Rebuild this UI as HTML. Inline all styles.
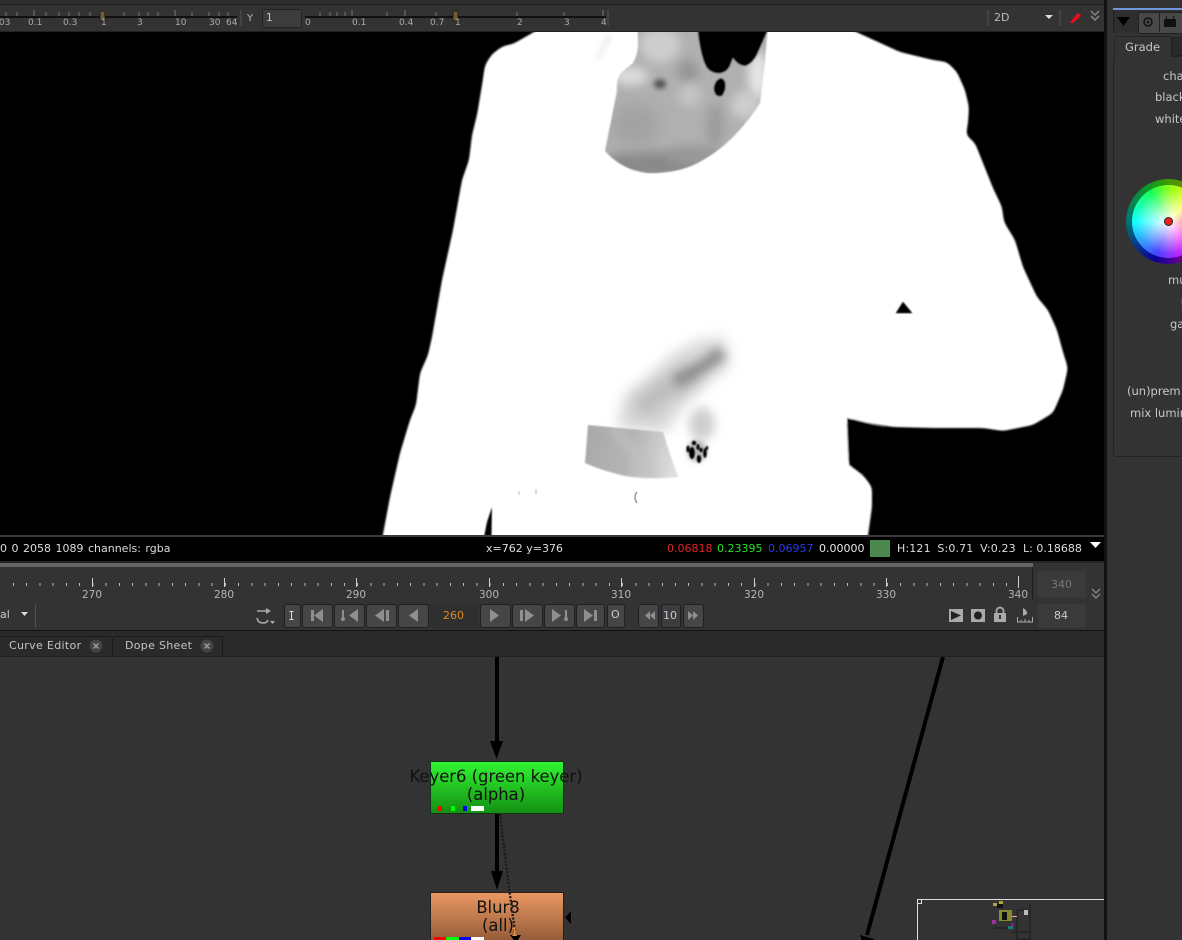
<!DOCTYPE html>
<html><head><meta charset="utf-8"><title>Nuke viewer</title>
<style>
html,body{margin:0;padding:0;background:#333}
#p{position:relative;width:1182px;height:940px;overflow:hidden;background:#333;font-family:"DejaVu Sans","Liberation Sans",sans-serif;font-size:11px;color:#ccc}
#p div,#p span.a{position:absolute}
.t{position:absolute;white-space:nowrap;line-height:14px}
.s{font-size:9px;color:#aaa;line-height:10px}
.b{background:#464646;border:1px solid #202020;border-radius:3px;box-sizing:border-box;height:24px;top:604px}
.l{font-size:10.5px;color:#b5b5b5}
.p{color:#c8c8c8;font-size:11.5px}
</style></head><body><div id="p">

<!-- top toolbar -->
<div style="left:0;top:0;width:1105px;height:4px;background:#2e2e2e"></div>
<div style="left:0;top:4px;width:1105px;height:1px;background:#1c1c1c"></div>
<div style="left:0;top:5px;width:1105px;height:26px;background:#333"></div>
<div style="left:0;top:31px;width:1105px;height:1px;background:#222"></div>
<div style="left:0;top:16px;width:237px;height:2px;background:#111"></div>
<div style="left:305px;top:16px;width:301px;height:2px;background:#111"></div>
<svg style="position:absolute;left:0;top:0" width="620" height="32"><path d="M6 12v4M17 12v4M34 10v6M46 12v4M59 12v4M69 12v4M79 12v4M90 12v4M124 12v4M139 12v4M148 12v4M158 12v4M175 10v6M192 12v4M209 12v4M219 12v4M228 12v4M320 12v4M330 12v4M337 12v4M345 12v4M352 10v6M387 12v4M405 10v6M436 12v4M517 12v4M564 12v4M603 10v6" stroke="#777" fill="none"/><rect x="100" y="11" width="5" height="10" fill="#6d5e30" stroke="#1d1d1d"/><rect x="453" y="11" width="5" height="10" fill="#6d5e30" stroke="#1d1d1d"/><path d="M241 10v16M608 10v16" stroke="#555"/></svg>
<span class="t s" style="left:-4px;top:18px">.03</span><span class="t s" style="left:28px;top:18px">0.1</span><span class="t s" style="left:63px;top:18px">0.3</span><span class="t s" style="left:101px;top:18px">1</span><span class="t s" style="left:137px;top:18px">3</span><span class="t s" style="left:175px;top:18px">10</span><span class="t s" style="left:209px;top:18px">30</span><span class="t s" style="left:226px;top:18px">64</span>
<span class="t" style="left:247px;top:12px;color:#abc;font-size:10px">Y</span>
<div style="left:262px;top:9px;width:38px;height:17px;background:#3c3c3c;border:1px solid #222;border-radius:3px"></div>
<span class="t" style="left:266px;top:11px;color:#bcd;font-size:10.5px">1</span>
<span class="t s" style="left:305px;top:18px">0</span><span class="t s" style="left:352px;top:18px">0.1</span><span class="t s" style="left:399px;top:18px">0.4</span><span class="t s" style="left:430px;top:18px">0.7</span><span class="t s" style="left:455px;top:18px">1</span><span class="t s" style="left:517px;top:18px">2</span><span class="t s" style="left:564px;top:18px">3</span><span class="t s" style="left:601px;top:18px">4</span>
<span class="t" style="left:994px;top:11px;color:#bbb">2D</span>
<svg style="position:absolute;left:985px;top:5px" width="120" height="26"><path d="M3 5v16M75 5v16" stroke="#555"/><path d="M60 10h8l-4 4z" fill="#ddd"/><path d="M85 18l5-7 3-3 3 2-2 3-6 5z" fill="#e8101a"/><path d="M106 6l4 4 4-4M106 11l4 4 4-4" stroke="#888" fill="none" stroke-width="1.5"/></svg>

<!-- viewer image -->
<div style="left:0;top:32px;width:1105px;height:503px;background:#000;overflow:hidden">
<svg style="position:absolute;left:0;top:-32px" width="1105" height="535" viewBox="0 0 1105 535">
<defs>
<filter id="e" x="-5%" y="-5%" width="110%" height="110%"><feGaussianBlur stdDeviation="0.8"/></filter>
<filter id="smooth" x="-5%" y="-5%" width="110%" height="110%"><feGaussianBlur stdDeviation="3.2"/><feComponentTransfer><feFuncA type="linear" slope="5" intercept="-2"/></feComponentTransfer></filter>
<filter id="b2" x="-50%" y="-50%" width="200%" height="200%"><feGaussianBlur stdDeviation="2.5"/></filter>
<filter id="b5" x="-50%" y="-50%" width="200%" height="200%"><feGaussianBlur stdDeviation="5"/></filter>
<filter id="b7" x="-50%" y="-50%" width="200%" height="200%"><feGaussianBlur stdDeviation="7"/></filter>
<filter id="b9" x="-50%" y="-50%" width="200%" height="200%"><feGaussianBlur stdDeviation="9"/></filter>
<clipPath id="nk"><path d="M637 25C638 40 640 50 633 63L622 72Q616 78 617 91L605 151Q622 170 647 173 680 174 703 160 735 142 760 103L765 61 768 25Z"/></clipPath>
<clipPath id="pk"><path d="M588 425L663 432Q670 455 678 477 650 480 625 476 600 470 585 463Z"/></clipPath>
<linearGradient id="pg" x1="0" x2="1" y1="0" y2="0.2"><stop offset="0" stop-color="#a6a6a6"/><stop offset=".55" stop-color="#b4b4b4"/><stop offset="1" stop-color="#dedede"/></linearGradient>
</defs>
<g filter="url(#e)"><path filter="url(#smooth)" fill="#fff" d="M555 20L513 44 503 46 492 54 485 65 482 85 477 115 472 135 469 160 462 180 453 230 442 280 432 337 428 355 420 373 417 397 416 405 410 420 400 453 390 497 380 550 866 550 872 507 872 487 863 475 849 465 847 418 867 423 893 427 933 428 983 428 1003 431 1033 425 1053 413 1063 390 1068 368 1063 352 1057 330 1048 310 1037 297 1023 267 1015 240 1004 222 1002 207 993 188 983 163 975 143 966 135 968 123 969 107 965 90 957 72 947 62 933 60 900 52 830 20Z"/>
<path d="M847 418L849 465 862 475 885 445 885 427 867 423Z" fill="#000"/></g>
<path d="M492 507L491.500 537 484 537 487 522Z" fill="#000" filter="url(#e)"/>
<path d="M610 35L597 60" stroke="#f2f2f2" stroke-width="6" filter="url(#b2)"/>
<!-- neck -->
<g filter="url(#e)"><g clip-path="url(#nk)">
<rect x="600" y="25" width="175" height="155" fill="#b0b0b0"/>
<ellipse cx="650" cy="165" rx="55" ry="14" fill="#8a8a8a" filter="url(#b5)"/>
<ellipse cx="695" cy="155" rx="28" ry="10" fill="#989898" filter="url(#b5)"/>
<ellipse cx="635" cy="125" rx="25" ry="22" fill="#a2a2a2" filter="url(#b9)"/>
<ellipse cx="630" cy="76" rx="18" ry="9" fill="#dedede" filter="url(#b5)"/>
<ellipse cx="660" cy="45" rx="20" ry="18" fill="#cdcdcd" filter="url(#b5)"/>
<ellipse cx="688" cy="72" rx="10" ry="12" fill="#949494" filter="url(#b5)"/>
<ellipse cx="690" cy="95" rx="12" ry="12" fill="#c4c4c4" filter="url(#b5)"/>
<ellipse cx="660" cy="84" rx="6" ry="5" fill="#555" filter="url(#b2)"/>
<ellipse cx="758" cy="75" rx="10" ry="24" fill="#e6e6e6" filter="url(#b5)"/>
<ellipse cx="745" cy="105" rx="14" ry="14" fill="#cecece" filter="url(#b5)"/>
<ellipse cx="715" cy="125" rx="9" ry="22" fill="#9c9c9c" filter="url(#b5)"/>
<path d="M697 25C699 45 702 60 707 68 713 75 725 76 730 66L733 58Q738 66 746 66 753 63 757 55L768 30V25Z" fill="#000"/>
<path d="M721 78C727 79 727 90 722 96 715 98 713 91 714 86Q716 79 721 78Z" fill="#000"/>
</g></g>
<!-- smear -->
<path d="M617 428L625 395 650 375 672 355 700 340 725 338 730 365 705 385 680 410 665 432Z" fill="#d6d6d6" filter="url(#b7)"/>
<path d="M640 412C655 392 675 385 695 372" stroke="#bbb" stroke-width="20" fill="none" filter="url(#b7)"/>
<path d="M675 382C695 372 710 362 722 352" stroke="#8e8e8e" stroke-width="13" fill="none" filter="url(#b5)"/>
<ellipse cx="702" cy="424" rx="13" ry="17" fill="#cfcfcf" filter="url(#b5)"/>
<!-- pocket -->
<g filter="url(#e)"><g clip-path="url(#pk)"><rect x="580" y="420" width="105" height="65" fill="url(#pg)"/><path d="M612 425L655 478" stroke="#c0c0c0" stroke-width="8" filter="url(#b5)"/></g></g>
<!-- dots -->
<ellipse cx="697" cy="451" rx="10" ry="11" fill="#bbb" filter="url(#b2)"/>
<g fill="#000" filter="url(#e)">
<ellipse cx="694" cy="443" rx="2.2" ry="2.2"/><ellipse cx="688" cy="449" rx="1.6" ry="3.5"/><ellipse cx="692" cy="453" rx="2.8" ry="6"/><ellipse cx="698" cy="447" rx="1.6" ry="3"/><ellipse cx="699" cy="459" rx="2.2" ry="4"/><ellipse cx="705" cy="453" rx="1.8" ry="5"/><ellipse cx="701" cy="450" rx="1.6" ry="2.2"/><ellipse cx="707" cy="448" rx="1.2" ry="2"/>
</g>
<path d="M903 302L912 313 896 313Z" fill="#000" filter="url(#e)" stroke="#000" stroke-width=".5"/>
<path d="M637 492Q633 497 637 503" stroke="#999" stroke-width="1.5" fill="none"/>
<path d="M519 491v4M536 489v5" stroke="#ccc" stroke-width="1.3"/>
</svg>
</div>

<!-- status bar -->
<div style="left:0;top:535px;width:1105px;height:2px;background:#3a3a3a"></div>
<div style="left:0;top:537px;width:1105px;height:24px;background:#000"></div>
<span class="t" style="left:0;top:542px;color:#ddd;word-spacing:1px">0 0 2058 1089 channels: rgba</span>
<span class="t" style="left:486px;top:542px;color:#ddd">x=762 y=376</span>
<span class="t" style="left:667px;top:542px;color:#e42424">0.06818</span>
<span class="t" style="left:717px;top:542px;color:#28e028">0.23395</span>
<span class="t" style="left:768px;top:542px;color:#2a3ae8">0.06957</span>
<span class="t" style="left:819px;top:542px;color:#e8e8e8">0.00000</span>
<div style="left:870px;top:540px;width:20px;height:17px;background:#4a8a4f"></div>
<span class="t" style="left:897px;top:542px;color:#ddd;word-spacing:3px;letter-spacing:.15px">H:121 S:0.71 V:0.23</span>
<div style="left:1023px;top:542px;width:60px;height:14px;overflow:hidden"><span class="t" style="left:0;top:0;color:#ddd">L: 0.18688</span></div>
<svg style="position:absolute;left:1088px;top:541px" width="14" height="8"><path d="M2 1h11l-5.500 6z" fill="#fff"/></svg>

<!-- timeline -->
<div style="left:0;top:561px;width:1105px;height:2px;background:#262626"></div>
<div style="left:0;top:563px;width:1033px;height:4px;background:#666"></div>
<div style="left:1032px;top:567px;width:1px;height:33px;background:#1c1c1c"></div>
<div style="left:13px;top:583px;width:1006px;height:3px;background:repeating-linear-gradient(90deg,#b8b8b8 0 1px,transparent 1px 13.24px)"></div>
<svg style="position:absolute;left:0;top:576px" width="1030" height="14"><path d="M92.500 2v9M224.500 2v9M356.500 2v9M489.500 2v9M621.500 2v9M754.500 2v9M886.500 2v9M1018.500 0v12" stroke="#d0d0d0" fill="none"/></svg>
<span class="t l" style="left:82px;top:588px">270</span><span class="t l" style="left:214px;top:588px">280</span><span class="t l" style="left:346px;top:588px">290</span><span class="t l" style="left:479px;top:588px">300</span><span class="t l" style="left:611px;top:588px">310</span><span class="t l" style="left:744px;top:588px">320</span><span class="t l" style="left:876px;top:588px">330</span><span class="t l" style="left:1008px;top:588px">340</span>
<div style="left:1037px;top:571px;width:49px;height:27px;background:#3a3a3a;border-radius:2px"></div>
<span class="t" style="left:1051px;top:578px;color:#777">340</span>
<svg style="position:absolute;left:1090px;top:588px" width="12" height="14"><path d="M2 1l4 4 4-4M2 6l4 4 4-4" stroke="#888" fill="none" stroke-width="1.3"/></svg>

<!-- transport row -->
<span class="t" style="left:0;top:608px;color:#ccc">al</span>
<div class="b" style="left:284px;width:17px"></div>
<div class="b" style="left:302px;width:31px"></div>
<div class="b" style="left:334px;width:31px"></div>
<div class="b" style="left:366px;width:31px"></div>
<div class="b" style="left:398px;width:31px"></div>
<div style="left:430px;top:604px;width:49px;height:24px;background:#2f2f2f"></div>
<span class="t" style="left:443px;top:609px;color:#e08a20">260</span>
<div class="b" style="left:480px;width:31px"></div>
<div class="b" style="left:512px;width:31px"></div>
<div class="b" style="left:544px;width:31px"></div>
<div class="b" style="left:576px;width:29px"></div>
<div class="b" style="left:607px;width:18px"></div>
<span class="t" style="left:611px;top:608px;color:#ccc">O</span>
<div class="b" style="left:638px;width:21px"></div>
<div class="b" style="left:661px;width:20px;background:#3d3d3d"></div>
<span class="t" style="left:663px;top:609px;color:#bcd">10</span>
<div class="b" style="left:683px;width:21px"></div>
<div style="left:1038px;top:604px;width:48px;height:24px;background:#3a3a3a;border-radius:2px"></div>
<span class="t" style="left:1054px;top:609px;color:#ccc">84</span>
<svg style="position:absolute;left:0;top:600px" width="1060" height="32">
<path d="M21 12h7l-3.500 4z" fill="#ddd"/><path d="M35.500 5v22" stroke="#555"/>
<g fill="none" stroke="#aaa" stroke-width="1.600"><path d="M257 11h11M268 20q-1 3-5 3-5 0-6-5"/></g>
<path d="M266 8l5 3-5 3zM270 21h5l-2.500 3z" fill="#aaa"/>
<path d="M289.500 11.500h4M289.500 19.500h4M291.500 11.500v8" stroke="#ddd" fill="none"/>
<g fill="#8f8f8f">
<rect x="311" y="10" width="3" height="11"/><path d="M323 9v13l-9-6.500z"/>
<path d="M358 9v13l-9-6.500z"/><circle cx="343" cy="19" r="2"/><rect x="342" y="10" width="2" height="8"/>
<path d="M384 9v13l-9-6.500z"/><rect x="386" y="10" width="3" height="11"/>
<path d="M418 9v13l-9-6.500z"/>
<path d="M490 9v13l9-6.500z"/>
<rect x="520" y="10" width="3" height="11"/><path d="M525 9v13l9-6.500z"/>
<path d="M552 9v13l9-6.500z"/><circle cx="566" cy="19" r="2"/><rect x="565" y="10" width="2" height="8"/>
<path d="M584 9v13l9-6.500z"/><rect x="594" y="10" width="3" height="11"/>
<path d="M650 11v9l-5-4.500zM655 11v9l-5-4.500zM688 11v9l5-4.500zM693 11v9l5-4.500z"/>
</g>
<rect x="949" y="9" width="14" height="13" fill="#aaa"/><path d="M951 11v9l10-4.500z" fill="#222"/>
<rect x="971" y="9" width="14" height="13" fill="#aaa"/><circle cx="978" cy="15.500" r="4" fill="#222"/>
<rect x="994" y="13" width="12" height="9" fill="#aaa"/><path d="M996.500 13v-2a3.500 3.500 0 0 1 7 0v2" stroke="#aaa" fill="none" stroke-width="1.800"/><rect x="999" y="15" width="2" height="4" fill="#333"/>
<path d="M1017.500 17v5h15v-5M1021 20v2M1025 19v3M1029 20v2" stroke="#aaa" fill="none"/><path d="M1023 8q5 3 4 6l-4 2z" fill="#aaa"/>
</svg>

<!-- separator & tabs -->
<div style="left:0;top:630px;width:1105px;height:1px;background:#111"></div>
<div style="left:0;top:631px;width:1105px;height:26px;background:#2a2a2a"></div>
<div style="left:0;top:656px;width:1105px;height:1px;background:#222"></div>
<div style="left:112px;top:637px;width:1px;height:19px;background:#1c1c1c"></div>
<div style="left:113px;top:636px;width:109px;height:1px;background:#1c1c1c"></div>
<div style="left:0;top:636px;width:112px;height:1px;background:#1c1c1c"></div>
<div style="left:222px;top:636px;width:1px;height:20px;background:#1c1c1c"></div>
<span class="t" style="left:9px;top:639px;color:#c4c4c4;letter-spacing:.33px">Curve Editor</span>
<span class="t" style="left:125px;top:639px;color:#c4c4c4;letter-spacing:.3px">Dope Sheet</span>
<svg style="position:absolute;left:88px;top:638px" width="130" height="16"><circle cx="8" cy="8" r="6.500" fill="#444"/><circle cx="119" cy="8" r="6.500" fill="#444"/><path d="M5.500 5.500l5 5M10.500 5.500l-5 5M116.500 5.500l5 5M121.500 5.500l-5 5" stroke="#999" stroke-width="1.500"/></svg>

<!-- node graph -->
<svg style="position:absolute;left:0;top:657px" width="1105" height="283" viewBox="0 657 1105 283">
<path d="M497 657V743" stroke="#000" stroke-width="4"/><path d="M490 741h13l-6.500 18z" fill="#000"/>
<path d="M497 813V872" stroke="#000" stroke-width="4"/><path d="M491 871h12l-6 19z" fill="#000"/>
<path d="M943 657L867 935" stroke="#000" stroke-width="4"/><path d="M860 935l14 4-9 12z" fill="#000"/>
<path d="M1105.500 899.500H917.500V940" stroke="#e0e0e0" fill="none"/><rect x="917.500" y="899.500" width="4" height="4" fill="#333" stroke="#e0e0e0"/>
<g fill="none" stroke="#222" stroke-width="1.500"><path d="M1017 910h10M1030 904v36M1017 910v30M994 928h16M1012 932h18M1017 939h13"/></g>
<rect x="999" y="910" width="13" height="11" fill="#8a8a30"/><rect x="1002" y="912" width="5" height="8" fill="#111"/><rect x="993" y="903" width="4" height="3" fill="#a8a840"/><rect x="999" y="901" width="4" height="3" fill="#a8a840"/><rect x="997" y="904" width="6" height="4" fill="#111"/>
<rect x="992" y="920" width="4" height="4" fill="#a030a0"/><rect x="1008" y="926" width="5" height="3" fill="#108080"/><rect x="1012" y="916" width="5" height="1" fill="#f0b0b0"/><rect x="1024" y="910" width="4" height="5" fill="#bbb"/><rect x="1012" y="923" width="1" height="4" fill="#a030a0"/>
</svg>
<div style="left:430px;top:761px;width:132px;height:51px;background:linear-gradient(#32f432,#139013);border:1px solid #16301a"></div>
<div class="t" style="left:386px;width:220px;top:768px;text-align:center;color:#111;font-size:16.4px;line-height:18px">Keyer6 (green keyer)<br>(alpha)</div>
<div style="left:438px;top:806px;width:4px;height:5px;background:#f00"></div>
<div style="left:451px;top:806px;width:4px;height:5px;background:#0f0"></div>
<div style="left:463px;top:806px;width:4px;height:5px;background:#00f"></div>
<div style="left:471px;top:806px;width:13px;height:5px;background:#fff"></div>
<div style="left:430px;top:892px;width:132px;height:60px;background:linear-gradient(#ea9862,#7e4c2c);border:1px solid #2a2018"></div>
<div class="t" style="left:398px;width:200px;top:899px;text-align:center;color:#111;font-size:16.4px;line-height:18px">Blur8<br>(all)</div>
<div style="left:434px;top:937px;width:12px;height:3px;background:#f00"></div>
<div style="left:446px;top:937px;width:13px;height:3px;background:#0f0"></div>
<div style="left:459px;top:937px;width:12px;height:3px;background:#00f"></div>
<div style="left:471px;top:937px;width:13px;height:3px;background:#fff"></div>
<svg style="position:absolute;left:490px;top:810px" width="90" height="130" viewBox="490 810 90 130"><path d="M500 814L508 880 515 932" stroke="#1c1c1c" stroke-width="2.400" stroke-dasharray="2 1.600" fill="none"/><path d="M571 911v13l-6-6.500z" fill="#000"/><path d="M510 935h11l-5 8z" fill="#000"/></svg>
<span class="t" style="left:511px;top:926px;color:#f0a050;font-size:11px">1</span>

<!-- right panel -->
<div style="left:1104px;top:0;width:3px;height:940px;background:#111"></div>
<div style="left:1107px;top:0;width:75px;height:940px;background:#333"></div>
<div style="left:1113px;top:8px;width:69px;height:2px;background:#6f97dd"></div>
<div style="left:1113px;top:10px;width:69px;height:23px;background:#2e2e2e;border-left:1px solid #222;box-sizing:border-box"></div>
<div style="left:1138px;top:12px;width:60px;height:20px;background:#484848;border:1px solid #222;border-radius:3px"></div>
<div style="left:1159px;top:13px;width:1px;height:19px;background:#222"></div>
<svg style="position:absolute;left:1115px;top:12px" width="67" height="20"><path d="M2 5h13l-6.500 9z" fill="#000"/><circle cx="33" cy="10" r="4" fill="none" stroke="#111" stroke-width="1.500"/><circle cx="33" cy="10" r="1.300" fill="#111"/><rect x="49" y="7" width="12" height="8" fill="#111"/><path d="M52 7l-1-3M58 7l1-3" stroke="#111"/></svg>
<div style="left:1113px;top:56px;width:80px;height:401px;background:#333;border:1px solid #242424;border-radius:3px;box-sizing:border-box"></div>
<div style="left:1114px;top:36px;width:58px;height:21px;background:#333;border:1px solid #242424;border-bottom:none;border-radius:3px 3px 0 0;box-sizing:border-box"></div>
<div style="left:1172px;top:37px;width:12px;height:19px;background:#2a2a2a;border:1px solid #222;box-sizing:border-box"></div>
<span class="t p" style="left:1125px;top:40px">Grade</span>
<span class="t p" style="left:1163px;top:69px">cha</span>
<span class="t p" style="left:1155px;top:90px">black</span>
<span class="t p" style="left:1155px;top:112px">white</span>
<div style="left:1126px;top:179px;width:85px;height:85px;border-radius:50%;background:conic-gradient(#50c000 0deg,#b0a000 45deg,#c02020 90deg,#c000a0 140deg,#1000c0 200deg,#009090 270deg,#10c030 330deg,#50c000 360deg);filter:brightness(.8)"></div>
<div style="left:1132px;top:185px;width:73px;height:73px;border-radius:50%;background:radial-gradient(circle,#fff 0,rgba(255,255,255,.1) 62%,rgba(255,255,255,0) 90%),conic-gradient(#7fff00 0deg,#ff0 45deg,#f33 90deg,#f0f 140deg,#33f 200deg,#0ff 270deg,#0f4 330deg,#7fff00 360deg)"></div>
<div style="left:1164px;top:217px;width:7px;height:7px;border-radius:50%;background:#f02020;border:1px solid #222"></div>
<span class="t p" style="left:1168px;top:273px">mu</span>
<div style="left:1181px;top:298px;width:1px;height:7px;background:#456"></div>
<span class="t p" style="left:1170px;top:317px">ga</span>
<span class="t p" style="left:1127px;top:384px">(un)prem</span>
<span class="t p" style="left:1130px;top:406px">mix lumin</span>

</div></body></html>
